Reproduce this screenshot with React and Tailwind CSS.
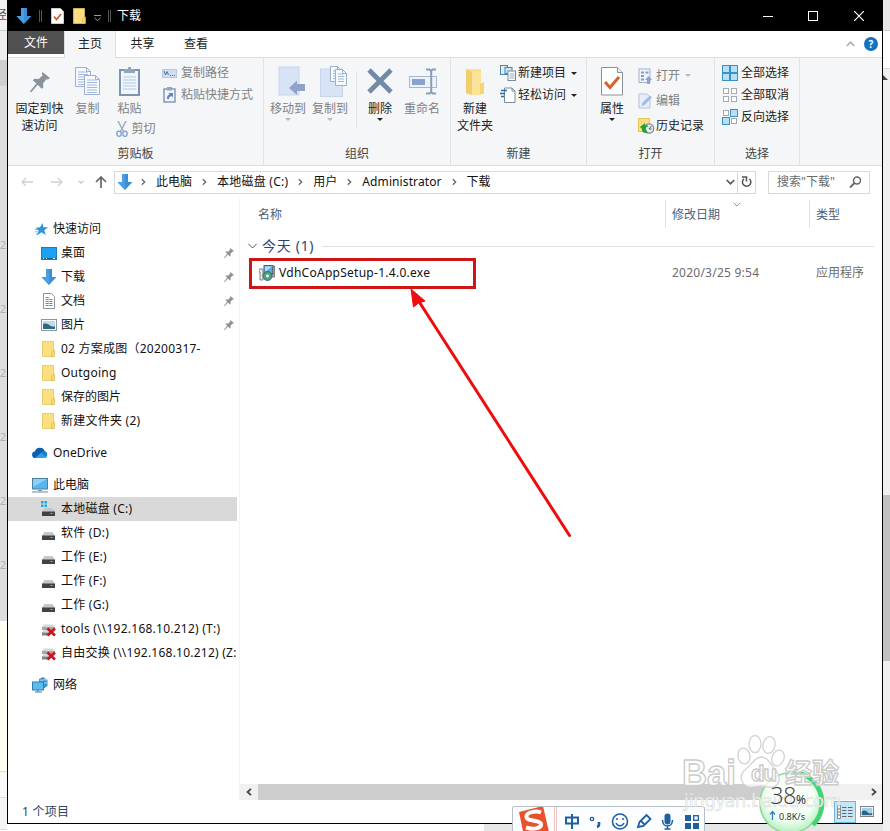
import React from 'react';

const DownArrow = ({ className = 'w-4 h-4' }) => (
  <svg className={className} viewBox="0 0 16 16">
    <path d="M5 0h6v8h4.500L8 16 .5 8H5z" fill="#3a8fd8" />
    <path d="M5 0h3v16L.5 8H5z" fill="#4a9fe2" />
  </svg>
);

const Folder = ({ className = 'w-[13px] h-4' }) => (
  <svg className={className} viewBox="0 0 13 16" preserveAspectRatio="none">
    <path d="M0.5 0.5h11v15h-11z" fill="#fbdf80" stroke="#e8c35c" strokeWidth="0.8" />
    <path d="M9.5 10.5l3-1.5v6.5h-3z" fill="#f8d56c" stroke="#dfb64d" strokeWidth="0.6" />
  </svg>
);

const Pin = ({ className, fill = '#8b9299' }) => (
  <svg className={className} viewBox="0 0 20 20">
    <path d="M12.5 0l7.5 6-2 1.6-1.5-.3-3.400 4 .2 4.200-1.600 1.300-4-4L1.500 20H0l.6-1.500 5.800-7L2.800 8.200 4.500 6.800l4.200.2 4-3.800-.9-1.500z" fill={fill} />
  </svg>
);

const Chevron = ({ className = 'w-[5px] h-2', stroke = '#666' }) => (
  <svg className={className} viewBox="0 0 5 8">
    <path d="M.8 1.300L3.700 4 .8 6.700" fill="none" stroke={stroke} strokeWidth="1.300" />
  </svg>
);

const ChevronDown = ({ className, stroke = '#555', w = 1.2 }) => (
  <svg className={className} viewBox="0 0 10 6">
    <path d="M.8.8L5 5 9.200.8" fill="none" stroke={stroke} strokeWidth={w} />
  </svg>
);

const Caret = ({ fill = '#222', className = '' }) => (
  <svg className={'h-[3px] w-[6px] shrink-0 ' + className} viewBox="0 0 6 3">
    <path d="M0 0h6L3 3z" fill={fill} />
  </svg>
);

const Page = ({ x, y, w, h }) => (
  <g transform={`translate(${x} ${y})`}>
    <path d={`M.5.5h${w - 5}l4 4v${h - 5}h-${w - 1}z`} fill="#f6f9fd" stroke="#9db0cc" />
    <path d={`M${w - 4.5}.5v4h4`} fill="none" stroke="#9db0cc" />
    {[5, 7.5, 10, 12.5, 15, 17.5].filter((v) => v < h - 2).map((v) => (
      <path key={v} d={`M3 ${v}h${w - 6}`} stroke="#9fb8de" />
    ))}
  </g>
);

const CopyIcon = () => (
  <svg width="25" height="29" viewBox="0 0 25 29">
    <Page x={0} y={0} w={16} h={20} />
    <Page x={9} y={8} w={16} h={20} />
  </svg>
);

const PasteIcon = () => (
  <svg width="21" height="30" viewBox="0 0 21 30">
    <rect x="1" y="4" width="19" height="25" fill="#f1f6fd" stroke="#7d93b3" strokeWidth="2" />
    <path d="M4 11h13M4 14h13M4 17h13M4 20h13M4 23h13" stroke="#b3c9e8" />
    <path d="M5 3h4V1h3v2h4v4H5z" fill="#93a4bb" />
  </svg>
);

const ScissorsIcon = () => (
  <svg width="12" height="16" viewBox="0 0 12 16">
    <path d="M2 0l5.500 10.500M10 0L4.500 10.500" stroke="#9fb0c6" strokeWidth="1.600" />
    <ellipse cx="3" cy="12.700" rx="2.200" ry="2.600" fill="none" stroke="#7ea0cf" strokeWidth="1.300" />
    <ellipse cx="9" cy="12.700" rx="2.200" ry="2.600" fill="none" stroke="#7ea0cf" strokeWidth="1.300" />
  </svg>
);

const PathIcon = () => (
  <svg width="15" height="9" viewBox="0 0 15 9">
    <rect x=".5" y=".5" width="14" height="8" fill="#cfdef3" stroke="#b5c8e4" />
    <path d="M2 2l1.500 4L5 2.500 6.500 6" fill="none" stroke="#56719b" />
    <path d="M8 6.500h1M10 6.500h1M12 6.500h1" stroke="#56719b" />
  </svg>
);

const ShortcutIcon = () => (
  <svg width="13" height="16" viewBox="0 0 13 16">
    <rect x="1" y="2" width="11" height="13" fill="#f2f6fc" stroke="#7e93b3" strokeWidth="1.400" />
    <rect x="4" y="0" width="5" height="3.500" fill="#93a4bb" />
    <path d="M4 12c-.2-3 1-4 2.500-4.500L5.500 6H10v4.500L8.500 9C7 9.500 6 10 6 12z" fill="#6284bd" />
  </svg>
);

const MoveIcon = () => (
  <svg width="27" height="30" viewBox="0 0 27 30">
    <rect x="1" y="1" width="20" height="28" fill="#d8e4f6" stroke="#c6d5ec" />
    <path d="M11 22l8-7.500V18h8v7h-8v4z" fill="#8fa3c8" />
  </svg>
);

const CopyToIcon = () => (
  <svg width="27" height="31" viewBox="0 0 27 31">
    <rect x=".5" y="3" width="22" height="27.500" fill="#d8e4f6" stroke="#c6d5ec" />
    <Page x={10} y={0} w={12} h={16} />
    <Page x={15} y={3} w={12} h={17} />
  </svg>
);

const DeleteIcon = () => (
  <svg width="26" height="26" viewBox="0 0 26 26">
    <path d="M2 2l22 22M24 2L2 24" stroke="#7389a9" strokeWidth="4.800" />
  </svg>
);

const RenameIcon = () => (
  <svg width="29" height="27" viewBox="0 0 29 27">
    <rect x=".5" y="8.500" width="27" height="11" fill="#eef3fa" stroke="#a4b8d6" />
    <rect x="3" y="11" width="13" height="6" fill="#88a3cc" />
    <path d="M17 1.500h3.500L22 3l1.500-1.500H27M22.200 3v21M17 25.500h3.500L22 24l1.500 1.500H27" fill="none" stroke="#8a9db9" strokeWidth="2" />
  </svg>
);

const NewFolderIcon = () => (
  <svg width="20" height="27" viewBox="0 0 20 27">
    <path d="M1 1h15v25H1z" fill="#fbe08c" />
    <path d="M1 1l6 3v23l-6-2z" fill="#f3cf6c" />
    <path d="M7 4h9v23H7z" fill="#fce39a" />
    <path d="M15 16l4-2v12h-4z" fill="#f5d377" />
  </svg>
);

const NewItemIcon = () => (
  <svg width="17" height="16" viewBox="0 0 17 16">
    <rect x=".5" y=".5" width="7" height="9" fill="#dbeefa" stroke="#4d82ac" />
    <rect x="5" y="2.500" width="7" height="6" fill="#cbe5f7" stroke="#4d82ac" />
    <rect x="8" y="6" width="7.500" height="9.500" fill="#fff" stroke="#7a8a99" />
    <path d="M9.500 9h5M9.500 11h5M9.500 13h5" stroke="#9ab" />
  </svg>
);

const EasyIcon = () => (
  <svg width="16" height="16" viewBox="0 0 16 16">
    <path d="M4.500 1H12l3 3v11.500H4.500z" fill="#fff" stroke="#7a8a99" />
    <path d="M12 1v3h3" fill="none" stroke="#7a8a99" />
    <path d="M1 3.500h6M0 6.500h5M1 9.500h3" stroke="#1874b8" strokeWidth="1.300" />
  </svg>
);

const PropsIcon = () => (
  <svg width="22" height="30" viewBox="0 0 22 30">
    <path d="M.5 1.500h16l5 5v22.500H.5z" fill="#fff" stroke="#8a8f96" />
    <path d="M16.500 1.500v5h5" fill="#eee" stroke="#8a8f96" />
    <path d="M4 16l5 5.500L18 11" fill="none" stroke="#d9622b" strokeWidth="3" />
  </svg>
);

const OpenIcon = () => (
  <svg width="14" height="16" viewBox="0 0 14 16">
    <rect x="1" y="1" width="11" height="13.500" fill="#f0f5fc" stroke="#9fb2d0" />
    <path d="M3 3.500h3v2H3zM3 7h3v2H3zM3 10.500h3v2H3zM7.500 3.500h3v2h-3z" fill="#7f9dcb" />
    <path d="M10.500 8L14 12h-2v4H9v-4H7z" fill="#8ba3cb" />
  </svg>
);

const EditIcon = () => (
  <svg width="14" height="16" viewBox="0 0 14 16">
    <path d="M1 1h8l3 3v11H1z" fill="#e6eefa" stroke="#b3c3dc" />
    <path d="M3.500 13l1-3.500L12 2.500l2 2-7.500 7.500z" fill="#a5bbdd" />
  </svg>
);

const HistoryIcon = () => (
  <svg width="17" height="16" viewBox="0 0 17 16">
    <rect x=".5" y=".5" width="11" height="13" fill="#f9df80" stroke="#e6c45e" />
    <circle cx="11" cy="10.500" r="4.700" fill="#e9edf0" stroke="#7b868f" strokeWidth="1.300" />
    <path d="M11 11l2.500-3M11 11h2.500" fill="none" stroke="#555" />
    <path d="M2 9l5-4v2.500c2-.5 3 0 3.500 1-2 0-3 1-2.500 3l2 3.500C6 15.500 3.500 14 4 11z" fill="#27a03a" />
  </svg>
);

const SelectIcon = ({ mode }) => {
  const cells = [[0, 0], [8, 0], [0, 8], [8, 8]];
  const on = { all: [1, 1, 1, 1], none: [0, 0, 0, 0], invert: [0, 1, 1, 0] }[mode];
  return (
    <svg width="16" height="16" viewBox="0 0 16 16">
      {cells.map(([x, y], i) =>
        on[i] ? (
          <rect key={i} x={x + 0.5} y={y + 0.5} width="7" height="7" fill="#b5e0fa" stroke="#3d8fc4" />
        ) : (
          <rect key={i} x={x + 1.5} y={y + 1.5} width="5" height="5" fill="#fff" stroke="#a5aab0" />
        )
      )}
    </svg>
  );
};

const Group = ({ label, width, children }) => (
  <div className={'flex shrink-0 flex-col border-r border-[#e1e3e6] ' + width}>
    <div className="flex min-h-0 flex-1">{children}</div>
    <div className="h-[23px] text-center leading-6 text-[#444]">{label}</div>
  </div>
);

const Big = ({ icon, lines, width, muted, caret, children }) => (
  <div className={'flex shrink-0 flex-col items-center pt-[5px] ' + width + (muted ? ' text-[#808285]' : ' text-[#222]')}>
    <div className="flex h-[36px] items-center justify-center">{icon}</div>
    <div className="h-px" />
    {lines.map((l) => (
      <div key={l} className="leading-[17px]">{l}</div>
    ))}
    {caret && <Caret className="mt-px" fill={muted ? '#b5b8bb' : '#222'} />}
    {children}
  </div>
);

const Small = ({ icon, text, muted, caret, h = 'h-[22px]', iw = 'w-[19px]' }) => (
  <div className={'flex items-center ' + h + (muted ? ' text-[#808285]' : ' text-[#222]')}>
    <span className={'flex shrink-0 items-center ' + iw}>{icon}</span>
    <span>{text}</span>
    {caret && <Caret className="ml-[5px]" fill={muted ? '#b5b8bb' : '#222'} />}
  </div>
);

const Desktop = () => (
  <svg width="16" height="13" viewBox="0 0 16 13">
    <rect x=".5" y=".5" width="15" height="12" fill="#1ba1f1" stroke="#0d7fcb" />
    <path d="M1 11.500h14" stroke="#0a5e9a" />
    <path d="M2 11.500h1M5 11.500h1M12 11.500h2" stroke="#fff" />
  </svg>
);
const Doc = () => (
  <svg width="12" height="16" viewBox="0 0 12 16">
    <path d="M.5.5h8l3 3v12H.5z" fill="#fff" stroke="#8a979f" />
    <path d="M2.500 4.500h4M2.500 6.500h7M2.500 8.500h7M2.500 10.500h7M2.500 12.500h7" stroke="#3f97c0" />
    <path d="M6 4v9" stroke="#fff" strokeWidth=".6" />
  </svg>
);
const Picture = () => (
  <svg width="16" height="12" viewBox="0 0 16 12">
    <rect x=".5" y=".5" width="15" height="11" fill="#fff" stroke="#8b989f" />
    <rect x="2" y="2" width="12" height="8" fill="#b9dcf1" />
    <path d="M2 5c3-1 5 0 7 1.500s4 1 5 1V10H2z" fill="#33667f" />
  </svg>
);
const Star = () => (
  <svg width="13" height="13" viewBox="0 0 14 14">
    <path d="M8 0l1 4.500 5 .2-4 3 1.500 5.300-4.500-3L2 13.500l2-5L1 5l4.500-.3z" fill="#2e94d8" />
    <path d="M0 7h3M0 9.500h3M1 12h2" stroke="#5aaee4" />
  </svg>
);
const Cloud = () => (
  <svg className="-mt-px" width="16" height="11" viewBox="0 0 16 11">
    <path d="M3.500 11a3.300 3.300 0 01-.3-6.600A5 5 0 0112.500 4 3.600 3.600 0 0112.500 11z" fill="#1781d0" />
    <path d="M3 4.500A5 5 0 0112.500 4C10 4 8 6.500 4 11H3.500A3.300 3.300 0 013 4.500z" fill="#0d5faf" />
    <path d="M3 11l6-5 6 4.500-2 .5z" fill="#2ba2e8" />
  </svg>
);
const Monitor = () => (
  <svg width="16" height="15" viewBox="0 0 16 15">
    <rect x=".5" y=".5" width="15" height="10.500" fill="#58b5ee" stroke="#4c7f9f" />
    <path d="M1 1h14L1 9z" fill="#8ed0f7" />
    <path d="M0 14h16M6 12.500h4" stroke="#72899a" />
  </svg>
);
const Drive = ({ win, bad }) => (
  <svg width="15" height="16" viewBox="0 0 15 16">
    {win && <path d="M0 0h2.500v2.500H0zM3.500 0H6v2.500H3.500zM0 3.500h2.500V6H0zM3.500 3.500H6V6H3.500z" fill="#1fa5e4" />}
    {bad ? (
      <>
        <path d="M3 3.500h9l2 2.500H1z" fill="#d6d8d8" />
        <rect x="1" y="6" width="13" height="3" fill="#a3a6a6" />
        <path d="M3 9h9l2 2.500H1z" fill="#d6d8d8" />
        <rect x="1" y="11.500" width="8" height="3" fill="#7f8383" />
        <path d="M6.500 7.500l7.500 7M14 7.500l-7.500 7" stroke="#c8141f" strokeWidth="2.600" />
      </>
    ) : (
      <>
        <path d="M3.500 7h8l2.500 4H1z" fill="#c4c8c9" />
        <rect x="1" y="10.500" width="13" height="4.500" fill="#3e4443" />
        <path d="M9.500 12.500h2" stroke="#5fd37d" />
      </>
    )}
  </svg>
);
const Network = () => (
  <svg width="17" height="16" viewBox="0 0 17 16">
    <path d="M7 2l4-2 4.500 3v6L11 12 7 9z" fill="#3f94c8" />
    <path d="M8 3c2 1 4-1 7 0M9 8c2-1 4-3 6-2" stroke="#b5e0f5" fill="none" />
    <rect x=".5" y="5" width="11" height="8" fill="#5cbcf0" stroke="#2f7fae" />
    <path d="M3 15h7M6 13v2" stroke="#2f7fae" />
  </svg>
);

const Item = ({ icon, text, root, pinned, selected }) => (
  <div className={'flex h-6 w-[229px] shrink-0 items-center overflow-hidden text-[#111] ' + (root ? 'pl-[24px] ' : 'pl-[32px] ') + (selected ? 'bg-[#d9d9d9]' : '')}>
    <span className={'flex shrink-0 items-center ' + (root ? 'w-[21px] justify-start' : 'mr-1 w-[17px] justify-center')}>{icon}</span>
    <span className="flex-1">{text}</span>
    {pinned && <Pin className="mr-[3px] h-[10px] w-[10px]" />}
  </div>
);

const Latin = ({ children }) => <span className="tracking-[0.24px]">{children}</span>;

const Crumb = ({ children, gap }) => (
  <>
    <Chevron className="h-2 w-[5px] shrink-0" />
    <span className={'shrink-0 text-[#111] ' + gap}>{children}</span>
  </>
);

const Paw = () => (
  <g fill="#fff" fillOpacity=".75" stroke="#d2d2d2" strokeWidth="1.300">
    <ellipse cx="744" cy="756" rx="6" ry="8" transform="rotate(-10 744 756)" />
    <ellipse cx="755" cy="744" rx="6" ry="8.500" />
    <ellipse cx="769" cy="745" rx="6" ry="8.500" transform="rotate(12 769 745)" />
    <ellipse cx="778" cy="758" rx="6" ry="8" transform="rotate(20 778 758)" />
    <path d="M761 757c6 0 9 6 13 11s7 9 4 15-10 4-17 3c-7 1-14 3-18-3s-1-11 4-15 8-11 14-11z" />
  </g>
);

export default function App() {
  return (
    <div className="relative h-[831px] w-[890px] overflow-hidden whitespace-nowrap bg-white text-[12px] [font-family:'Noto_Sans','Noto_Sans_CJK_SC',sans-serif]">
      {/* page behind the window */}
      <div className="absolute inset-0 flex">
        <div className="flex w-[7px] flex-col overflow-hidden bg-[#dedede]">
          <div className="flex h-[31px] shrink-0 items-center justify-end border-b border-[#ccc] bg-[#f1f1f1] text-[#555]">径</div>
          <div className="h-[29px] shrink-0 bg-[#f0eeee]" />
          <div className="h-[26px] shrink-0 bg-[#cfcfcf]" />
          <div className="flex flex-1 flex-col pt-[151px] text-[11px] text-[#b0b0b0]">
            {[0, 1, 2, 3, 4, 5].map((i) => (
              <div key={i} className="h-16 shrink-0">2</div>
            ))}
          </div>
          <div className="h-[150px] shrink-0 bg-[#fffff2]" />
          <div className="h-[27px] shrink-0 border-y border-[#ddd] bg-[#fafafa]" />
          <div className="h-[32px] shrink-0 border-b border-[#ddd] bg-[#f5f5f5]" />
          <div className="h-[16px] shrink-0 bg-white" />
        </div>
        <div className="flex flex-1 flex-col justify-end">
          <div className="ml-[477px] h-[7px] bg-[#e6e6e6]" />
        </div>
        <div className="flex w-[7px] flex-col bg-[#f0f0f0]">
          <div className="h-[31px] border-b border-[#ccc] bg-[#e8e8e8]" />
          <div className="h-[38px] border-b border-[#ddd] bg-white" />
          <svg className="mt-[6px] h-[5px] w-[5px]" viewBox="0 0 5 5"><path d="M0 0l5 5H0z" fill="#444" /></svg>
          <div className="mt-[415px] h-[166px] bg-[#c1c1c1]" />
        </div>
      </div>

      {/* explorer window */}
      <div className="absolute left-[7px] top-0 flex h-[824px] w-[876px] flex-col border-x border-b border-black bg-white">
        <div className="flex h-[31px] shrink-0 items-center bg-black text-white">
          <DownArrow className="ml-[8px] h-4 w-4" />
          <span className="ml-[7px] h-3 w-[3px] border-x border-[#555]" />
          <svg className="ml-[9px] h-4 w-[13px]" viewBox="0 0 13 16">
            <path d="M.5.5h9l3 3v12H.5z" fill="#fff" stroke="#ccc" />
            <path d="M3 8.500l2.500 3L10 6" fill="none" stroke="#c5643a" strokeWidth="1.800" />
          </svg>
          <Folder className="ml-[9px] h-4 w-[13px]" />
          <svg className="ml-[8px] mt-[5px] h-[6px] w-[7px]" viewBox="0 0 7 6"><path d="M0 .5h7M.5 3L3.500 5.500 6.500 3" stroke="#999" fill="none" /></svg>
          <span className="ml-[7px] h-3 w-[3px] border-x border-[#555]" />
          <span className="ml-[6px]">下载</span>
          <div className="ml-auto flex items-center">
            <svg width="10" height="10" viewBox="0 0 10 10"><path d="M0 5.500h10" stroke="#fff" /></svg>
            <svg className="ml-[35px]" width="10" height="10" viewBox="0 0 10 10"><rect x=".5" y=".5" width="9" height="9" fill="none" stroke="#fff" /></svg>
            <svg className="ml-[36px] mr-[18px]" width="10" height="10" viewBox="0 0 10 10"><path d="M0 0l10 10M10 0L0 10" stroke="#fff" strokeWidth="1.200" /></svg>
          </div>
        </div>

        <div className="flex h-[27px] shrink-0 border-b border-[#dcdde0]">
          <div className="h-[23px] w-[56px] bg-[#505050] text-center leading-6 text-white">文件</div>
          <div className="-mb-px h-[27px] w-[52px] border-x border-[#dcdde0] bg-[#f5f6f7] text-center leading-[25px] text-[#222]">主页</div>
          <div className="w-[53px] text-center leading-[25px] text-[#222]">共享</div>
          <div className="w-[54px] text-center leading-[25px] text-[#222]">查看</div>
          <div className="ml-auto flex items-center pr-[4px]">
            <svg className="mr-[9px]" width="9" height="6" viewBox="0 0 9 6"><path d="M.8 5L4.500 1.200 8.200 5" fill="none" stroke="#aaa" strokeWidth="1.500" /></svg>
            <span className="h-[14px] w-[14px] rounded-full bg-[#1473c0] text-center text-[10px] font-bold leading-[14px] text-white">?</span>
          </div>
        </div>

        <div className="flex h-[108px] shrink-0 border-b border-[#dcdde0] bg-[#f5f6f7]">
          <Group label="剪贴板" width="w-[256px]">
            <Big width="ml-[3px] w-[57px]" icon={<Pin className="mt-[1px] h-[20px] w-[20px]" />} lines={['固定到快', '速访问']} />
            <Big width="w-[39px]" muted icon={<CopyIcon />} lines={['复制']} />
            <Big width="w-[45px]" muted icon={<PasteIcon />} lines={['粘贴']}>
              <div className="ml-[2px] mt-[3px] flex w-[30px] items-center gap-1 leading-[17px]">
                <span className="shrink-0"><ScissorsIcon /></span>
                <span>剪切</span>
              </div>
            </Big>
            <div className="ml-[10px] pt-1">
              <Small muted icon={<PathIcon />} text="复制路径" />
              <Small muted icon={<span className="ml-px"><ShortcutIcon /></span>} text="粘贴快捷方式" />
            </div>
          </Group>
          <Group label="组织" width="w-[187px]">
            <Big width="ml-[3px] w-[42px]" muted caret icon={<span className="ml-[6px]"><MoveIcon /></span>} lines={['移动到']} />
            <Big width="w-[42px]" muted caret icon={<span className="ml-[6px]"><CopyToIcon /></span>} lines={['复制到']} />
            <div className="ml-[5px] mt-[14px] h-[56px] w-px bg-[#e1e3e6]" />
            <Big width="ml-[4px] w-[38px]" caret icon={<DeleteIcon />} lines={['删除']} />
            <Big width="ml-[2px] w-[42px]" muted icon={<span className="ml-[3px]"><RenameIcon /></span>} lines={['重命名']} />
          </Group>
          <Group label="新建" width="w-[136px]">
            <Big width="ml-[1px] w-[46px]" icon={<NewFolderIcon />} lines={['新建', '文件夹']} />
            <div className="ml-[2px] pt-1">
              <Small caret iw="w-[18px]" icon={<NewItemIcon />} text="新建项目" />
              <Small caret iw="w-[18px]" icon={<EasyIcon />} text="轻松访问" />
            </div>
          </Group>
          <Group label="打开" width="w-[128px]">
            <Big width="ml-[3px] w-[44px]" caret icon={<PropsIcon />} lines={['属性']} />
            <div className="ml-[4px] pt-[5px]">
              <Small h="h-[25px]" iw="w-[18px]" muted caret icon={<OpenIcon />} text="打开" />
              <Small h="h-[25px]" iw="w-[18px]" muted icon={<EditIcon />} text="编辑" />
              <Small h="h-[25px]" iw="w-[18px]" icon={<HistoryIcon />} text="历史记录" />
            </div>
          </Group>
          <Group label="选择" width="w-[85px]">
            <div className="ml-[7px] pt-1">
              <Small icon={<SelectIcon mode="all" />} text="全部选择" />
              <Small icon={<SelectIcon mode="none" />} text="全部取消" />
              <Small icon={<SelectIcon mode="invert" />} text="反向选择" />
            </div>
          </Group>
        </div>

        <div className="flex h-[32px] shrink-0 items-center">
          <svg className="ml-[13px]" width="12" height="10" viewBox="0 0 12 10"><path d="M12 5H1M5 1L1 5l4 4" fill="none" stroke="#d0d0d0" strokeWidth="1.300" /></svg>
          <svg className="ml-[18px]" width="12" height="10" viewBox="0 0 12 10"><path d="M0 5h11M7 1l4 4-4 4" fill="none" stroke="#d0d0d0" strokeWidth="1.300" /></svg>
          <ChevronDown className="ml-[15px] h-1 w-[6px]" stroke="#c5c5c5" w={2} />
          <svg className="ml-[11px]" width="12" height="12" viewBox="0 0 12 12"><path d="M6 12V1M1 6l5-5 5 5" fill="none" stroke="#666" strokeWidth="1.700" /></svg>
          <div className="ml-[7px] flex h-[23px] w-[642px] shrink-0 items-center border border-[#d9d9d9]">
            <DownArrow className="ml-[2px] mr-[8px] h-4 w-4 shrink-0" />
            <Crumb gap="ml-[10px] mr-[10px]">此电脑</Crumb>
            <Crumb gap="ml-[10px] mr-[10px]"><Latin>本地磁盘 (C:)</Latin></Crumb>
            <Crumb gap="ml-[10px] mr-[10px]">用户</Crumb>
            <Crumb gap="ml-[10px] mr-[10px]"><span className="tracking-[0.1px]">Administrator</span></Crumb>
            <Crumb gap="ml-[10px]">下载</Crumb>
            <ChevronDown className="ml-auto mr-[2px] h-[6px] w-[9px]" stroke="#555" w={1.8} />
            <div className="flex h-full w-[18px] items-center justify-center border-l border-[#d9d9d9]">
              <svg width="11" height="12" viewBox="0 0 11 12"><path d="M8.500 3A4.200 4.200 0 113 2.800" fill="none" stroke="#555" strokeWidth="1.500" /><path d="M1 1h4.500v4.500" fill="none" stroke="#555" strokeWidth="1.500" /></svg>
            </div>
          </div>
          <div className="ml-[12px] flex h-[23px] w-[102px] shrink-0 items-center border border-[#d9d9d9] pl-[8px] text-[#6a6a6a]">
            <span>搜索"下载"</span>
            <svg className="ml-auto mr-[7px]" width="13" height="12" viewBox="0 0 13 12"><circle cx="8" cy="4.500" r="3.500" fill="none" stroke="#666" strokeWidth="1.500" /><path d="M5.500 7L1 11.500" stroke="#666" strokeWidth="1.800" /></svg>
          </div>
        </div>

        <div className="flex min-h-0 flex-1">
          <div className="flex w-[232px] shrink-0 flex-col border-r border-[#f3f3f3] pt-[19px]">
            <Item root icon={<span className="ml-[3px]"><Star /></span>} text="快速访问" />
            <Item pinned icon={<Desktop />} text="桌面" />
            <Item pinned icon={<DownArrow className="h-4 w-4" />} text="下载" />
            <Item pinned icon={<Doc />} text="文档" />
            <Item pinned icon={<Picture />} text="图片" />
            <Item icon={<Folder />} text={<Latin>02 方案成图（20200317-</Latin>} />
            <Item icon={<Folder />} text={<Latin>Outgoing</Latin>} />
            <Item icon={<Folder />} text="保存的图片" />
            <Item icon={<Folder />} text={<Latin>新建文件夹 (2)</Latin>} />
            <div className="h-2" />
            <Item root icon={<Cloud />} text={<span className="tracking-[0.1px]">OneDrive</span>} />
            <div className="h-2" />
            <Item root icon={<Monitor />} text="此电脑" />
            <Item selected icon={<Drive win />} text={<Latin>本地磁盘 (C:)</Latin>} />
            <Item icon={<Drive />} text={<Latin>软件 (D:)</Latin>} />
            <Item icon={<Drive />} text={<Latin>工作 (E:)</Latin>} />
            <Item icon={<Drive />} text={<Latin>工作 (F:)</Latin>} />
            <Item icon={<Drive />} text={<Latin>工作 (G:)</Latin>} />
            <Item icon={<Drive bad />} text={<Latin>tools (\\192.168.10.212) (T:)</Latin>} />
            <Item icon={<Drive bad />} text={<Latin>自由交换 (\\192.168.10.212) (Z:)</Latin>} />
            <div className="h-2" />
            <Item root icon={<Network />} text="网络" />
          </div>

          <div className="flex min-w-0 flex-1 flex-col">
            <div className="mt-[2px] flex h-[28px] shrink-0 text-[#4c607a]">
              <div className="w-[426px] border-r border-[#e2e2e2] pl-[18px] leading-[30px]">名称</div>
              <div className="relative w-[144px] border-r border-[#e2e2e2] pl-[6px] leading-[30px]">
                修改日期
                <ChevronDown className="absolute left-[67px] top-[2px] h-[5px] w-[8px]" stroke="#777" w={1} />
              </div>
              <div className="pl-[6px] leading-[30px]">类型</div>
            </div>
            <div className="mt-[8px] flex h-[20px] shrink-0 items-center pl-[7px] pr-[8px] text-[14px] text-[#2b4478]">
              <ChevronDown className="h-[6px] w-[11px]" stroke="#555" w={1} />
              <span className="ml-[4px] mr-[8px] leading-[18px] tracking-[0.7px]">今天 (1)</span>
              <span className="h-px flex-1 bg-[#e0e0e0]" />
            </div>
            <div className="flex h-[33px] shrink-0 items-center pt-px text-[#6d6d6d]">
              <div className="ml-[9px] flex h-[31px] w-[227px] items-center border-[3px] border-[#cf1616] pl-[7px] text-[#111]">
                <svg width="16" height="16" viewBox="0 0 16 16">
                  <path d="M0 4h4v11H1V7H0z" fill="#e9e9e9" stroke="#666" strokeWidth=".8" />
                  <rect x="5" y=".5" width="9" height="8" fill="#58a8e2" stroke="#48627a" />
                  <path d="M6 1.500h7L6 7z" fill="#b6dcf6" />
                  <path d="M14 2l1.500-1v11H12V9.500h2z" fill="#bbb" stroke="#555" strokeWidth=".7" />
                  <circle cx="8.500" cy="11" r="4.500" fill="#4e9f83" stroke="#2f5f55" strokeWidth=".8" />
                  <circle cx="8.500" cy="11" r="1.400" fill="#fff" />
                </svg>
                <span className="ml-[4px] tracking-[0.27px]">VdhCoAppSetup-1.4.0.exe</span>
              </div>
              <div className="ml-[196px] w-[144px]"><Latin>2020/3/25 9:54</Latin></div>
              <div>应用程序</div>
            </div>
            <div className="flex-1" />
            <div className="flex h-[16px] shrink-0 items-center bg-[#f0f0f0]">
              <svg className="ml-[6px] mr-[6px] shrink-0" width="6" height="8" viewBox="0 0 6 8"><path d="M5 .8L1.500 4 5 7.200" fill="none" stroke="#444" strokeWidth="1.800" /></svg>
              <div className="h-full w-[522px] bg-[#cdcdcd]" />
              <svg className="ml-auto mr-[5px]" width="6" height="8" viewBox="0 0 6 8"><path d="M1 .8L4.500 4 1 7.200" fill="none" stroke="#444" strokeWidth="1.800" /></svg>
            </div>
          </div>
        </div>

        <div className="flex h-[23px] shrink-0 items-center pl-[14px] text-[#2f4460]">
          <Latin>1 个项目</Latin>
          <div className="ml-auto flex h-[22px] w-[22px] items-center justify-center border border-[#6db6d8] bg-[#c4e6f6]">
            <svg width="16" height="14" viewBox="0 0 16 14">
              <rect x=".5" y=".5" width="3" height="13" fill="#fff" stroke="#777" strokeWidth=".8" />
              <path d="M5 2.500h4.500M11 2.500h4.500M5 5.500h4.500M11 5.500h4.500M5 8.500h4.500M11 8.500h4.500M5 11.500h4.500M11 11.500h4.500" stroke="#666" />
              <path d="M1 4h2M1 7h2M1 10h2" stroke="#666" />
            </svg>
          </div>
          <span className="ml-[4px] mr-[8px]">
            <svg width="14" height="11" viewBox="0 0 16 12" preserveAspectRatio="none"><rect x=".5" y=".5" width="15" height="11" fill="#fff" stroke="#777" /><rect x="2" y="2" width="12" height="8" fill="#9fd0ee" /><path d="M2 6c3-2 5-1 7 1s4 1 5 1v2H2z" fill="#2c6686" /></svg>
          </span>
        </div>
      </div>

      {/* annotation arrow */}
      <svg className="absolute left-0 top-0" width="890" height="831" viewBox="0 0 890 831">
        <path d="M569.500 535.500L418 300" stroke="#ee0c0c" strokeWidth="3" strokeLinecap="round" />
        <path d="M411 289l2.500 18 5-4 6.500-2z" fill="#ee0c0c" stroke="#ee0c0c" strokeWidth="1" />
      </svg>

      {/* input method bar */}
      <div className="absolute left-[512px] top-[806px] flex h-[30px] w-[193px] rounded-t-[2px] border border-[#b5bfc9] bg-[#fbfdff]">
        <svg className="ml-[4px] mt-0 shrink-0" width="34" height="28" viewBox="0 0 34 28">
          <path d="M2 5L26-1l6 26-6 4H7z" fill="#e9512a" />
          <path d="M24 5.500C19 3.500 9 5 9.500 10s14 2.500 14.500 7-8 6-15 3.500" fill="none" stroke="#fff" strokeWidth="4" />
        </svg>
        <span className="ml-[3px] h-full w-[3px] border-x border-[#f0c4c0]" />
        <svg className="shrink-0" width="144" height="26" viewBox="557 806 144 26" fill="none" stroke="#1d5fa0" strokeWidth="2">
          <path d="M566 816.500h12v6h-12zM572 813v15" />
          <circle cx="592" cy="818" r="1.700" strokeWidth="1.300" />
          <path d="M599 821v2c0 2-.5 2.500-2 3" strokeWidth="2.600" />
          <circle cx="620" cy="820.500" r="7.500" strokeWidth="1.600" />
          <path d="M617 817v2M623 817v2M616 822c1.500 3.500 6.500 3.500 8 0" strokeWidth="1.500" />
          <path d="M638 826l1.500-5 7-7 4 4-7 7zM641 820l3.500 3.500" strokeWidth="1.800" />
          <rect x="664.500" y="812.500" width="6" height="11" rx="3" fill="#1d5fa0" stroke="none" />
          <path d="M662.500 819c0 8 10 8 10 0M667.500 825v3M664.500 828h6" strokeWidth="1.500" />
          <path d="M685 814h6v6h-6zM685 822h6v6h-6zM693 822h6v6h-6z" fill="#1d5fa0" stroke="none" />
          <rect x="693.700" y="814.700" width="4.600" height="4.600" strokeWidth="1.300" />
        </svg>
      </div>

      {/* network meter and watermark */}
      <svg className="absolute left-0 top-0" width="890" height="831" viewBox="0 0 890 831">
        <defs>
          <radialGradient id="meter" cx=".5" cy=".4" r=".6">
            <stop offset="0" stopColor="#fff" />
            <stop offset=".65" stopColor="#f4fff5" />
            <stop offset="1" stopColor="#b3efbd" />
          </radialGradient>
        </defs>
        <circle cx="790" cy="803" r="30" fill="url(#meter)" stroke="#86d997" strokeWidth="1.500" />
        <path d="M791 772a31 31 0 0122 53" fill="none" stroke="#41d473" strokeWidth="4.500" />
        <Paw />
        <g fill="#fff" fillOpacity=".75" stroke="#cbcbcb" strokeWidth="1.400" fontWeight="700">
          <text x="682" y="786" fontSize="37" textLength="54" lengthAdjust="spacingAndGlyphs" fontFamily="Liberation Sans">Bai</text>
          <text x="751" y="781" fontSize="22" textLength="26" fontFamily="Liberation Sans">du</text>
          <text x="785" y="783" fontSize="27" textLength="54" fontFamily="Noto Sans CJK SC">经验</text>
        </g>
        <text x="684" y="807" fontSize="18" fill="#fff" fillOpacity=".8" stroke="#d4d4d4" strokeOpacity=".8" strokeWidth=".7" textLength="157" lengthAdjust="spacingAndGlyphs" fontFamily="Noto Sans">jingyan.baidu.com</text>
        <text x="770.500" y="803.500" fontSize="23" fill="#3a3a3a" fontWeight="300" textLength="26" fontFamily="Open Sans, Noto Sans, sans-serif">38</text>
        <text x="796" y="804" fontSize="12" fill="#333" textLength="10" lengthAdjust="spacingAndGlyphs" fontFamily="Noto Sans">%</text>
        <path d="M772.500 820v-8M770 814.500l2.500-3 2.500 3" stroke="#2f7cc4" fill="none" strokeWidth="1.200" />
        <text x="779" y="820" fontSize="9.500" fill="#333" textLength="26" lengthAdjust="spacingAndGlyphs" fontFamily="Noto Sans">0.8K/s</text>
      </svg>
    </div>
  );
}
